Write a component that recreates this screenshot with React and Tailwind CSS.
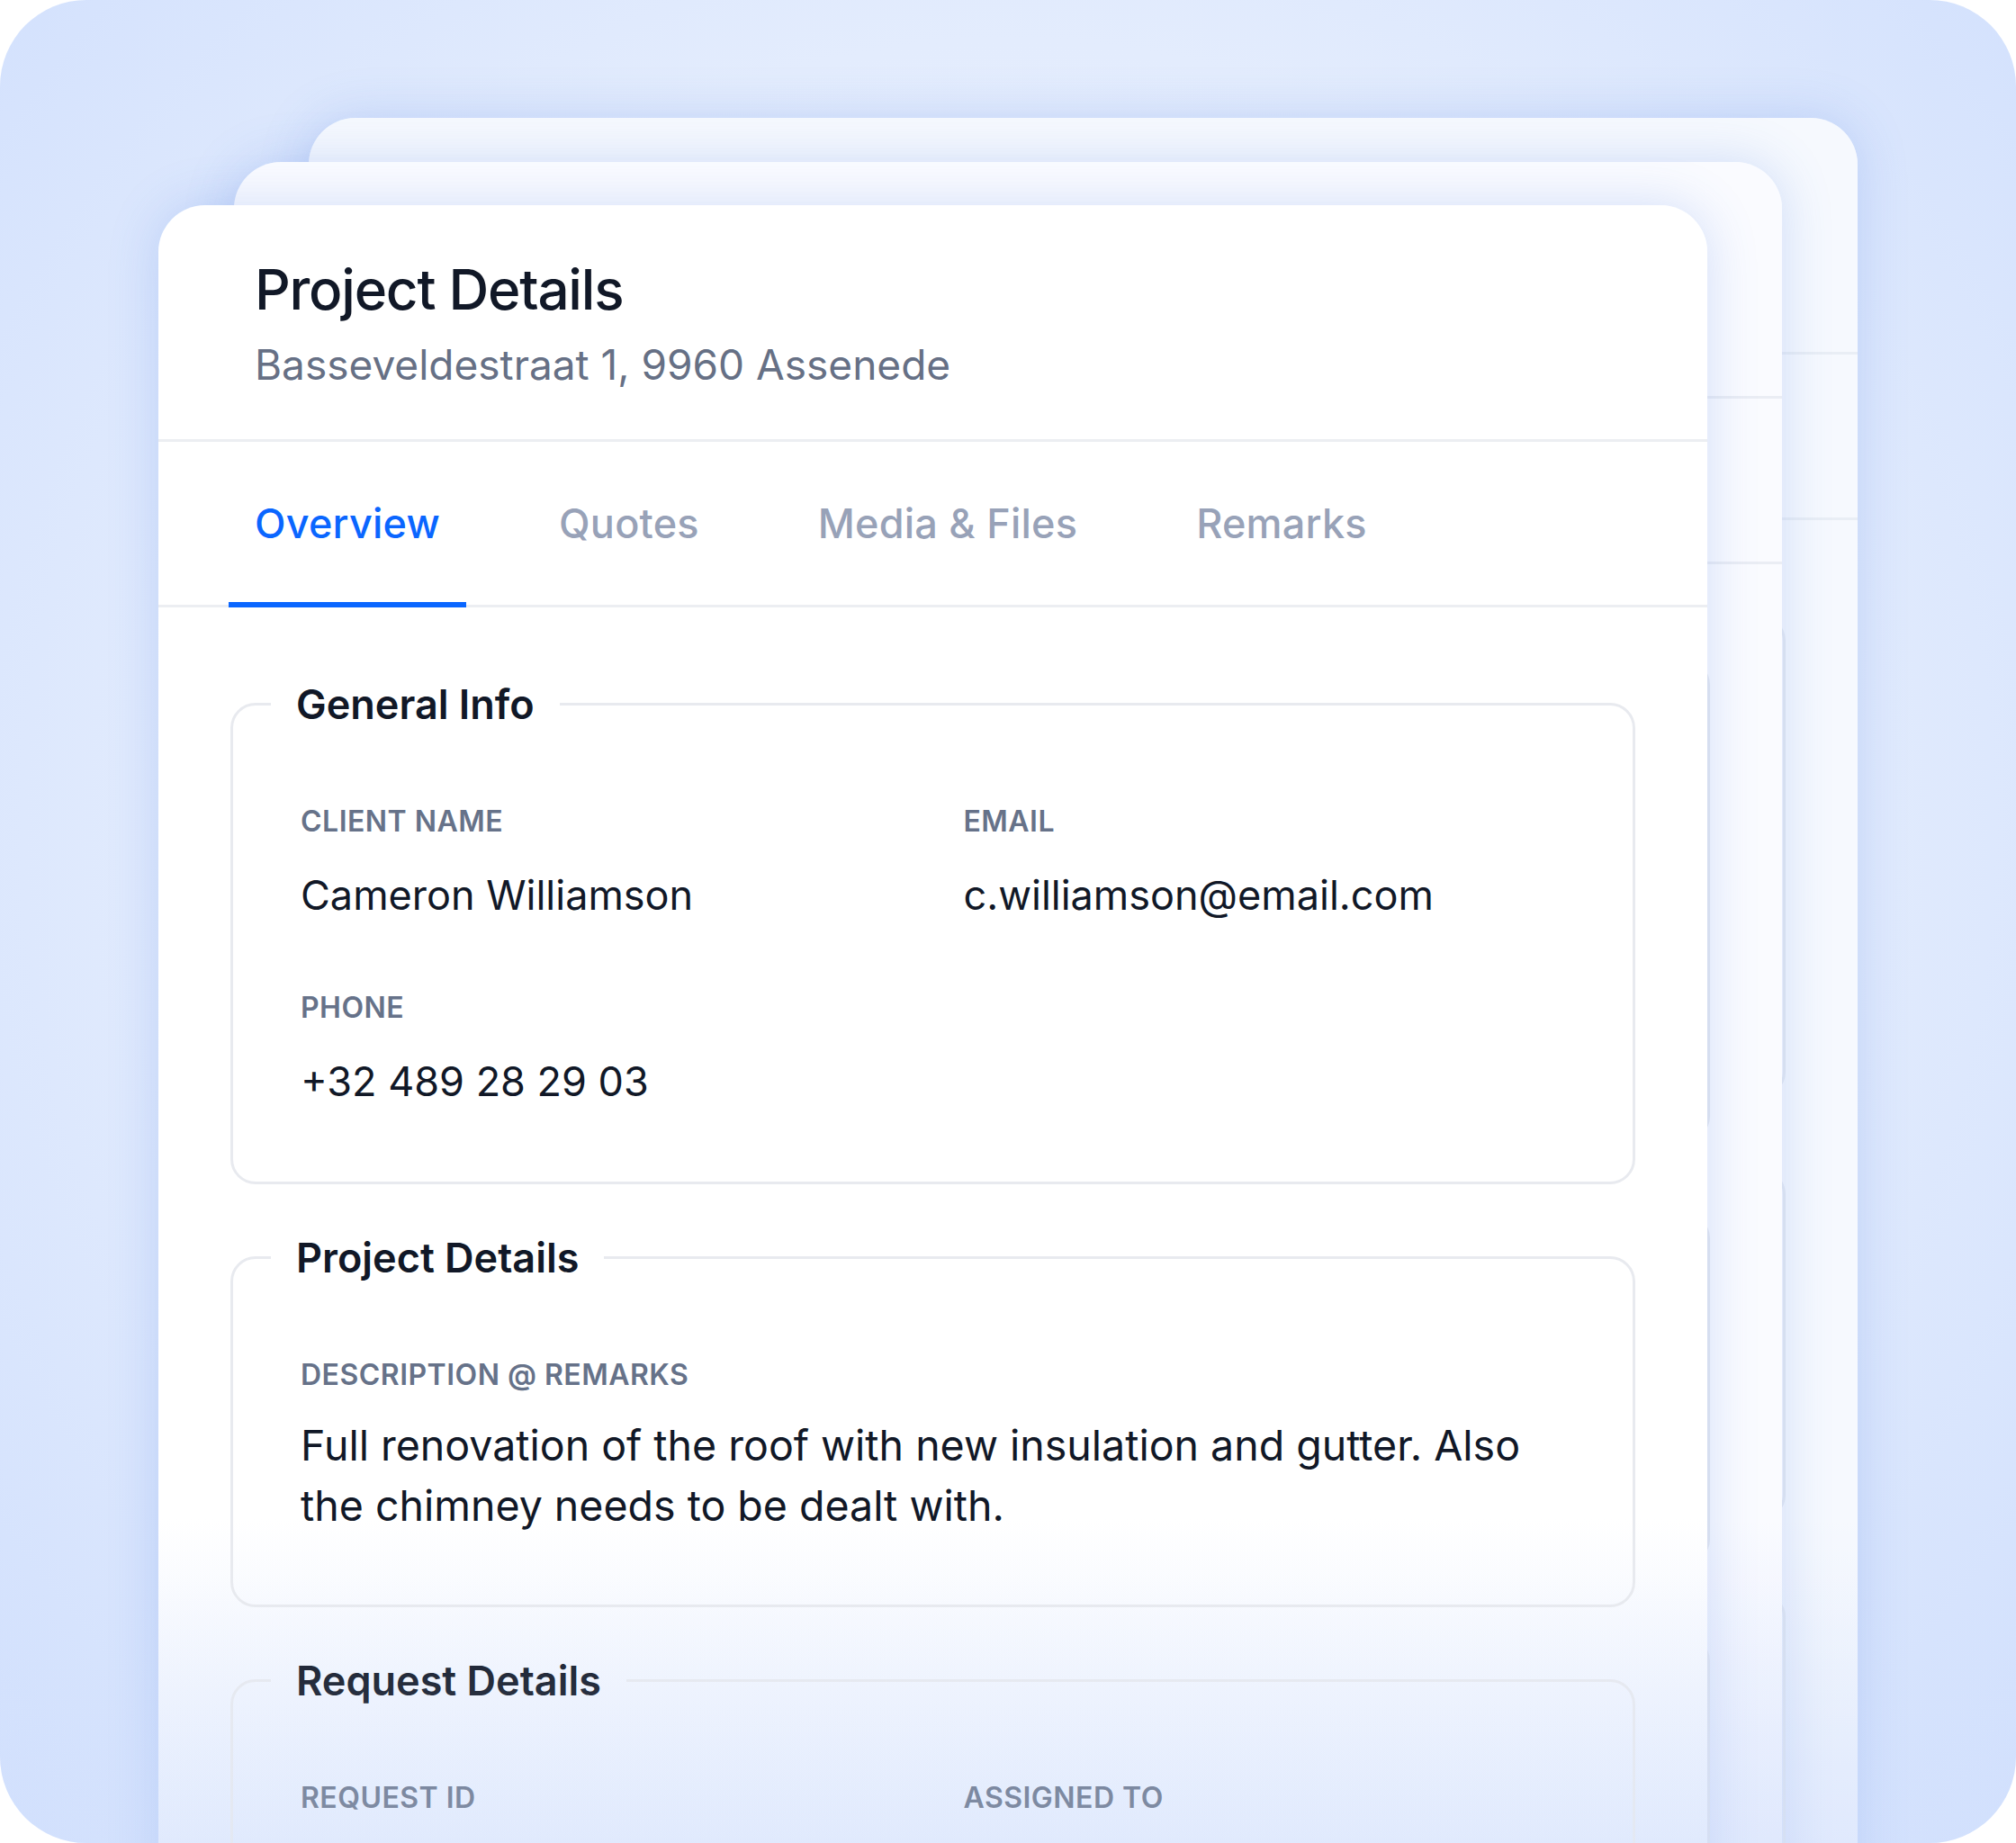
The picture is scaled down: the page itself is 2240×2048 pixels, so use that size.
import React from "react";

const tabs = ["Overview", "Quotes", "Media & Files", "Remarks"];

const Label = ({ children }) => (
  <span className="text-[32px] leading-[38px] font-semibold tracking-[0.015em] text-[#667289]">
    {children}
  </span>
);

const Field = ({ label, value }) => (
  <div className="flex flex-col gap-[36px]">
    <Label>{label}</Label>
    {value && <span className="text-[45px] leading-[54px] text-[#111827]">{value}</span>}
  </div>
);

const Section = ({ title, bottom = "pb-[84px]", children }) => (
  <fieldset className="border-[3px] border-[#e8eaef] rounded-[28px]">
    <legend className="ml-[42px] px-[28px] text-[45px] leading-[53px] font-semibold text-[#111827]">
      {title}
    </legend>
    <div className={`px-[75px] pt-[85px] ${bottom}`}>{children}</div>
  </fieldset>
);

// fade keeps the bottom of each card bluish where it meets the page edge
const Card = ({ fade, ghost }) => {
  const hidden = ghost
    ? "[&_h1]:invisible [&_p]:invisible [&_span]:invisible [&_legend]:invisible"
    : "";
  return (
    <div className={`rounded-t-[52px] shadow-[0_0_56px_rgba(70,120,225,0.22)] ${fade} ${hidden}`}>
      <div className="pl-[107px] pt-[58px] h-[263px] border-b-[3px] border-[#eceef2]">
        <h1 className="text-[62px] leading-[72px] font-medium tracking-[-0.02em] text-[#111827]">
          Project Details
        </h1>
        <p className="mt-[19px] text-[46px] leading-[56px] text-[#667085]">
          Basseveldestraat 1, 9960 Assenede
        </p>
      </div>

      <div className="flex gap-[74px] pl-[78px] h-[184px] border-b-[3px] border-[#eceef2]">
        {tabs.map((t, i) => (
          <div key={t} className="relative flex items-center px-[29px]">
            <span
              className={
                i === 0
                  ? "text-[45px] font-medium tracking-[0.005em] text-[#0a66ff]"
                  : "text-[45px] font-medium tracking-[0.005em] text-[#98a2b8]"
              }
            >
              {t}
            </span>
            {i === 0 && (
              <span className="absolute left-0 right-0 bottom-[-3px] h-[6px] bg-[#0a66ff]"></span>
            )}
          </div>
        ))}
      </div>

      <div className="flex flex-col gap-[55px] px-[80px] pt-[81px] pb-[80px]">
        <Section title="General Info">
          <div className="grid grid-cols-2 gap-x-[68px] gap-y-[79px]">
            <Field label="CLIENT NAME" value="Cameron Williamson" />
            <Field label="EMAIL" value="c.williamson@email.com" />
            <Field label="PHONE" value="+32 489 28 29 03" />
          </div>
        </Section>

        <Section title="Project Details" bottom="pb-[76px]">
          <div className="flex flex-col gap-[26px]">
            <Label>DESCRIPTION @ REMARKS</Label>
            <p className="text-[46.5px] leading-[67px] text-[#111827] pr-[40px]">
              Full renovation of the roof with new insulation and gutter. Also
              the chimney needs to be dealt with.
            </p>
          </div>
        </Section>

        <Section title="Request Details">
          <div className="grid grid-cols-2 gap-x-[68px] gap-y-[79px] min-h-[200px]">
            <Field label="REQUEST ID" />
            <Field label="ASSIGNED TO" />
          </div>
        </Section>
      </div>
    </div>
  );
};

export default function App() {
  return (
    <div className="w-[2240px] h-[2048px] bg-white font-['Inter',sans-serif]">
      <div className="relative w-full h-full rounded-[96px] overflow-hidden bg-[radial-gradient(ellipse_at_50%_45%,#eef3fe_0%,#e3ecfd_55%,#d0dffd_100%)]">
        <div className="absolute left-[343px] top-[131px] w-[1721px]">
          <Card ghost fade="bg-[linear-gradient(to_bottom,#ffffff_1560px,#e2eafd_1917px)]" />
          <div className="absolute inset-0 rounded-t-[52px] bg-[#e4edfd]/35"></div>
        </div>
        <div className="absolute left-[260px] top-[180px] w-[1720px]">
          <Card ghost fade="bg-[linear-gradient(to_bottom,#ffffff_1510px,#e3ebfd_1868px)]" />
          <div className="absolute inset-0 rounded-t-[52px] bg-[#e4edfd]/20"></div>
        </div>
        <div className="absolute left-[176px] top-[228px] w-[1721px]">
          <Card fade="bg-[linear-gradient(to_bottom,#ffffff_1460px,#e4ecfd_1820px)]" />
        </div>
        <div className="absolute inset-x-0 bottom-0 h-[300px] bg-gradient-to-b from-transparent to-[#d6e3fd]/25 pointer-events-none"></div>
      </div>
    </div>
  );
}
